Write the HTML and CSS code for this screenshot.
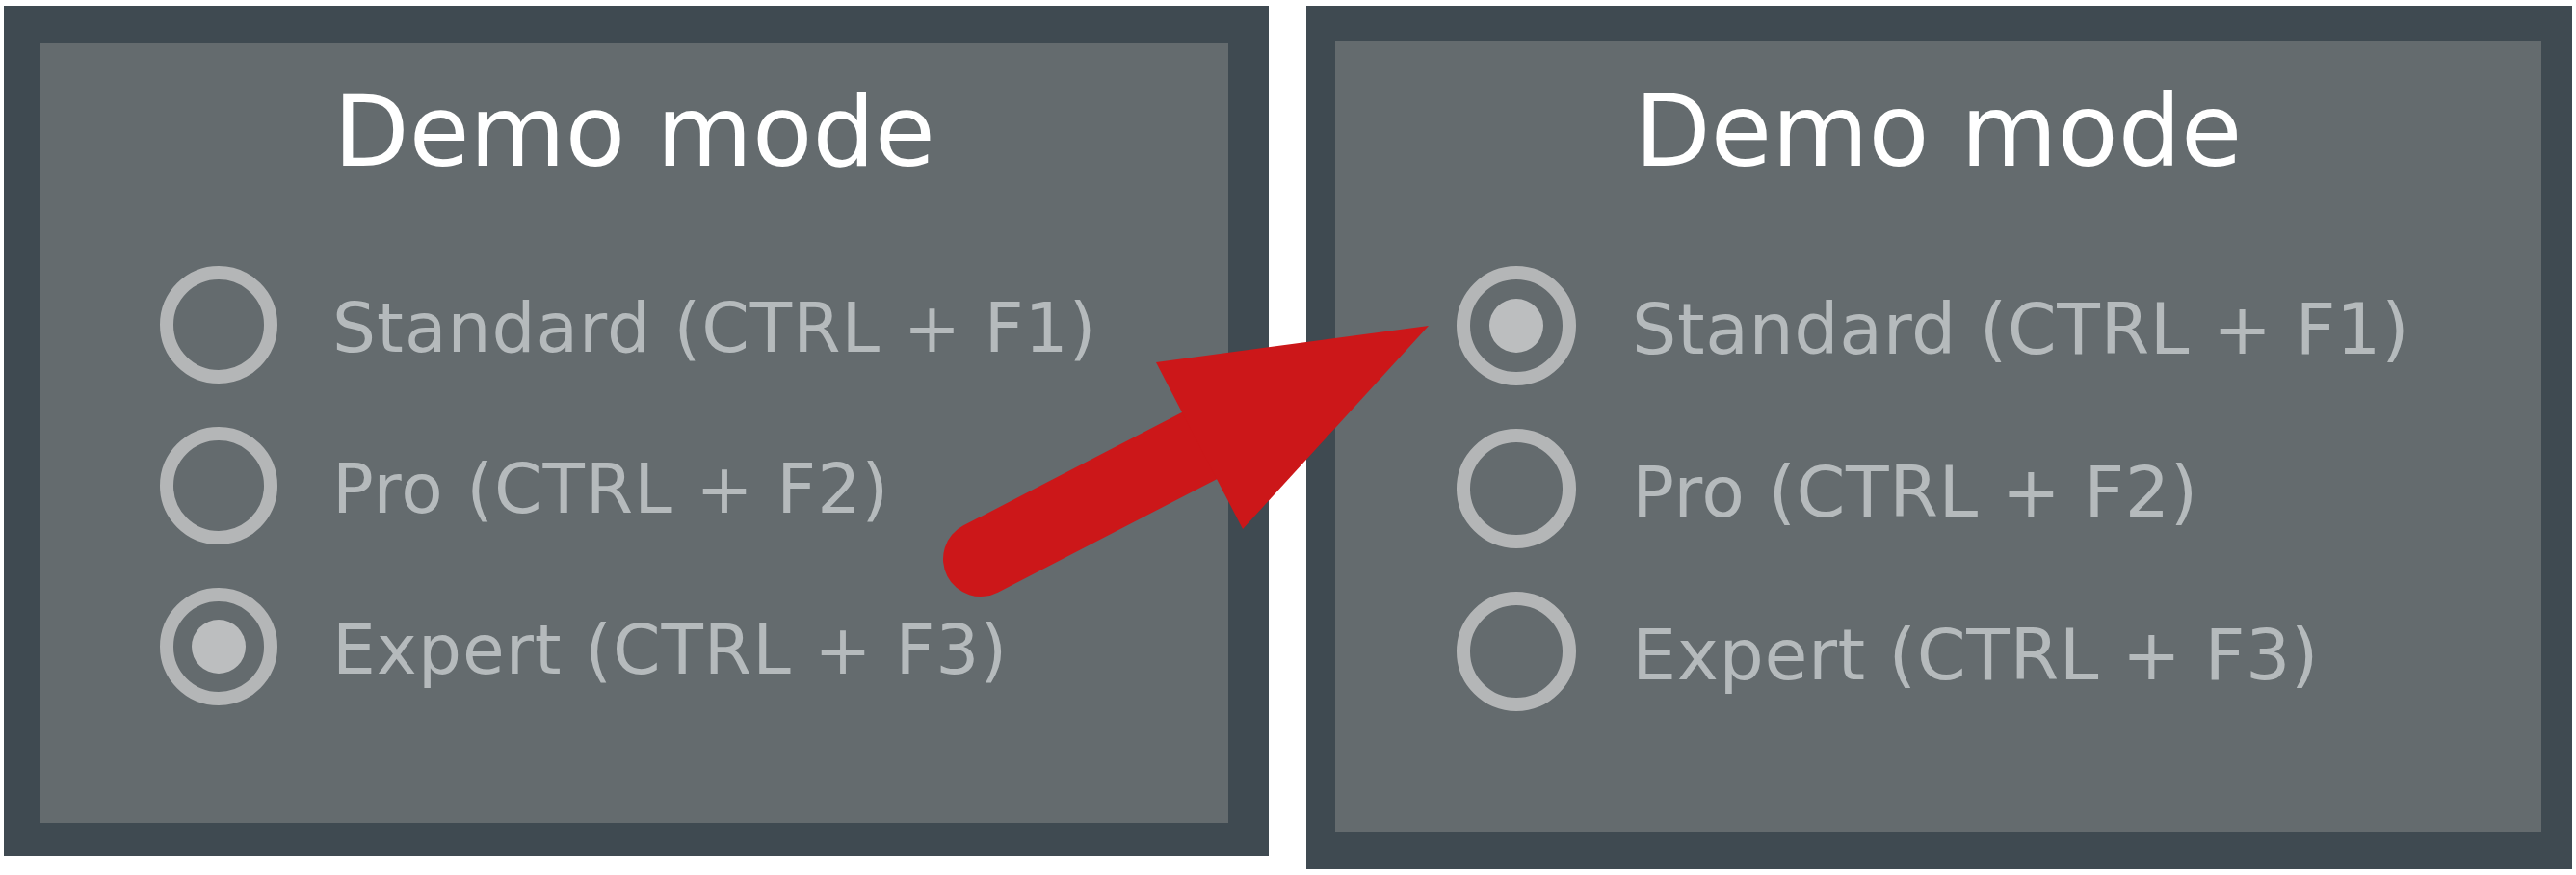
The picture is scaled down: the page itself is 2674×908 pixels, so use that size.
FILE: index.html
```html
<!DOCTYPE html>
<html lang="en">
<head>
<meta charset="utf-8">
<title>Demo mode</title>
<link rel="stylesheet" href="styles.css">
</head>
<body>
<div class="stage">
  <section class="panel panel--left">
    <div class="panel-inner">
      <h1 class="title">Demo mode</h1>
      <ul class="options">
        <li class="option"><span class="radio"></span><span class="label">Standard (CTRL + F1)</span></li>
        <li class="option"><span class="radio"></span><span class="label">Pro (CTRL + F2)</span></li>
        <li class="option"><span class="radio radio--checked"></span><span class="label">Expert (CTRL + F3)</span></li>
      </ul>
    </div>
  </section>
  <section class="panel panel--right">
    <div class="panel-inner">
      <h1 class="title">Demo mode</h1>
      <ul class="options">
        <li class="option"><span class="radio radio--checked"></span><span class="label">Standard (CTRL + F1)</span></li>
        <li class="option"><span class="radio"></span><span class="label">Pro (CTRL + F2)</span></li>
        <li class="option"><span class="radio"></span><span class="label">Expert (CTRL + F3)</span></li>
      </ul>
    </div>
  </section>
  <svg class="arrow" viewBox="0 0 2674 908" width="2674" height="908" aria-hidden="true">
    <line x1="1018" y1="580" x2="1250" y2="460" stroke="#cc1719" stroke-width="78" stroke-linecap="round"/>
    <polygon points="1200,376 1483,338 1290,549" fill="#cc1719"/>
  </svg>
</div>
</body>
</html>
```

FILE: styles.css
```css
* { box-sizing: border-box; }

html, body {
  margin: 0;
  padding: 0;
  background: #ffffff;
}

body {
  font-family: "DejaVu Sans", Verdana, sans-serif;
  width: 2674px;
  height: 908px;
  overflow: hidden;
}

.stage {
  position: relative;
  display: flex;
  align-items: flex-start;
  gap: 39px;
  padding: 6px 0 0 4px;
  width: 2674px;
  height: 908px;
}

.panel {
  flex: none;
  background: #3f4a51;
  border-style: solid;
  border-color: #3f4a51;
}

.panel--left {
  width: 1313px;
  height: 882px;
  border-width: 39px 42px 34px 38px;
}

.panel--right {
  width: 1314px;
  height: 896px;
  border-width: 37px 32px 39px 30px;
}

.panel-inner {
  width: 100%;
  height: 100%;
  background: #646b6e;
  display: flex;
  flex-direction: column;
}

.title {
  margin: 0;
  font-weight: normal;
  color: #ffffff;
  text-align: center;
  line-height: 1;
}

.panel--left .title {
  font-size: 102px;
  padding-top: 41px;
}

.panel--right .title {
  font-size: 103px;
  padding-top: 42px;
}

.options {
  list-style: none;
  margin: 65px 0 0 0;
  padding: 0;
  display: flex;
  flex-direction: column;
}

.panel--left .options { padding-left: 124px; }
.panel--right .options { padding-left: 126px; }

.option {
  display: flex;
  align-items: center;
}

.panel--left .option { height: 167px; gap: 57px; }
.panel--right .option { height: 169px; gap: 58px; }

.radio {
  flex: none;
  width: 122px;
  height: 122px;
  border: 14px solid #b4b6b7;
  border-radius: 50%;
  display: flex;
  align-items: center;
  justify-content: center;
}

.panel--right .radio {
  width: 124px;
  height: 124px;
}

.radio--checked::after {
  content: "";
  width: 56px;
  height: 56px;
  border-radius: 50%;
  background: #bcbebf;
}

.label {
  color: #b5babc;
  line-height: 1;
  white-space: nowrap;
  padding-top: 7px;
}

.panel--left .label {
  font-size: 71px;
  letter-spacing: 1px;
}

.panel--right .label {
  font-size: 73px;
  letter-spacing: 0.6px;
}

.arrow {
  position: absolute;
  left: 0;
  top: 0;
  pointer-events: none;
}
```
